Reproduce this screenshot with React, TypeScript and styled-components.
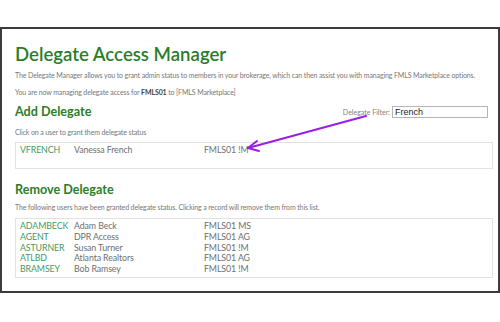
import React from "react";
import styled, { createGlobalStyle } from "styled-components";

const Global = createGlobalStyle`
  html, body { margin: 0; padding: 0; background: #ffffff; }
  body { font-family: Lato, "Open Sans", sans-serif; }
`;

const Page = styled.div`
  width: 500px;
  height: 322px;
  padding-top: 27px;
  box-sizing: border-box;
  position: relative;
`;

const Frame = styled.div`
  height: 266px;
  box-sizing: border-box;
  border: 2px solid #3c3c3c;
  padding: 14px 5px 0 13px;
`;

const Title = styled.h1`
  margin: 0;
  font-size: 18.6px;
  line-height: 22px;
  font-weight: 600;
  color: #2b7d2b;
`;

const Para = styled.p<{ $mt?: number }>`
  margin: ${(p) => p.$mt ?? 0}px 0 0 0;
  font-size: 7px;
  letter-spacing: -0.12px;
  line-height: 10px;
  white-space: nowrap;
  color: #777;
  b { color: #444; font-weight: 700; }
`;

const HeadRow = styled.div`
  display: flex;
  justify-content: space-between;
  align-items: center;
  margin-top: 7px;
`;

const Heading = styled.h2<{ $mt?: number }>`
  margin: ${(p) => p.$mt ?? 0}px 0 0 0;
  font-size: 12.6px;
  line-height: 16px;
  font-weight: 700;
  color: #2b7d2b;
`;

const Filter = styled.label`
  display: flex;
  align-items: center;
  gap: 2px;
  margin-right: 5px;
  font-size: 7px;
  color: #808080;
`;

const FilterInput = styled.input`
  width: 96px;
  height: 12px;
  box-sizing: border-box;
  border: 1px solid #b5b5b5;
  padding: 0 2px;
  font-family: "Liberation Sans", Arial, sans-serif;
  font-size: 9px;
  color: #222;
  outline: none;
`;

const List = styled.div<{ $h: number; $mt: number }>`
  margin-top: ${(p) => p.$mt}px;
  height: ${(p) => p.$h}px;
  box-sizing: border-box;
  border: 1.5px solid #e2e2e2;
  padding: 2px 4px;
`;

const Row = styled.div`
  display: grid;
  grid-template-columns: 54px 130px 1fr;
  font-size: 8.8px;
  letter-spacing: -0.1px;
  line-height: 10.75px;
  color: #6e6e6e;
`;

const User = styled.span`
  color: #3f9a63;
`;

const Arrow = styled.svg`
  position: absolute;
  left: 0;
  top: 0;
  pointer-events: none;
`;

const addRows = [["VFRENCH", "Vanessa French", "FMLS01 !M"]];
const removeRows = [
  ["ADAMBECK", "Adam Beck", "FMLS01 MS"],
  ["AGENT", "DPR Access", "FMLS01 AG"],
  ["ASTURNER", "Susan Turner", "FMLS01 !M"],
  ["ATLBD", "Atlanta Realtors", "FMLS01 AG"],
  ["BRAMSEY", "Bob Ramsey", "FMLS01 !M"],
];

export default function App() {
  return (
    <Page>
      <Global />
      <Frame>
        <Title>Delegate Access Manager</Title>
        <Para $mt={5}>
          The Delegate Manager allows you to grant admin status to members in your brokerage, which can then assist you with managing FMLS Marketplace options.
        </Para>
        <Para $mt={7}>
          You are now managing delegate access for <b>FMLS01</b> to [FMLS Marketplace]
        </Para>
        <HeadRow>
          <Heading>Add Delegate</Heading>
          <Filter>
            Delegate Filter:
            <FilterInput defaultValue="French" />
          </Filter>
        </HeadRow>
        <Para $mt={7}>Click on a user to grant them delegate status</Para>
        <List $h={27} $mt={5}>
          {addRows.map((r) => (
            <Row key={r[0]}>
              <User>{r[0]}</User>
              <span>{r[1]}</span>
              <span>{r[2]}</span>
            </Row>
          ))}
        </List>
        <Heading $mt={13}>Remove Delegate</Heading>
        <Para $mt={4}>
          The following users have been granted delegate status. Clicking a record will remove them from this list.
        </Para>
        <List $h={60} $mt={6}>
          {removeRows.map((r) => (
            <Row key={r[0]}>
              <User>{r[0]}</User>
              <span>{r[1]}</span>
              <span>{r[2]}</span>
            </Row>
          ))}
        </List>
      </Frame>
      <Arrow width="500" height="322" viewBox="0 0 500 322">
        <g stroke="#9a1ee6" strokeWidth="2" strokeLinecap="round" strokeLinejoin="round" fill="none">
          <line x1="366" y1="116" x2="248" y2="148" />
          <polyline points="257,141 248,148 259,151" />
        </g>
      </Arrow>
    </Page>
  );
}
